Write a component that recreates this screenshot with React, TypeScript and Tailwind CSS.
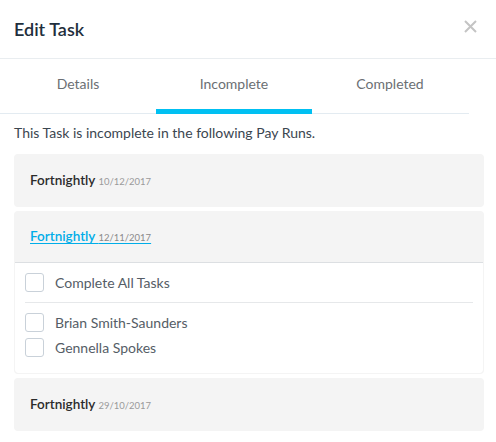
import React from "react";

const runs = [
  { name: "Fortnightly", date: "10/12/2017", open: false },
  { name: "Fortnightly", date: "12/11/2017", open: true },
  { name: "Fortnightly", date: "29/10/2017", open: false },
];

const employees = ["Brian Smith-Saunders", "Gennella Spokes"];

function Checkbox() {
  return <span className="block h-[19px] w-[19px] shrink-0 rounded-[3px] border border-[#c9d1d9] bg-white" />;
}

export default function App() {
  return (
    <div
      className="h-[442px] w-[496px] overflow-hidden bg-white"
      style={{ fontFamily: "Lato, 'Open Sans', sans-serif" }}
    >
      <div className="flex h-[59px] items-center justify-between border-b border-[#e9edf0] pl-[14px] pr-[19px]">
        <h2 className="text-[18px] font-semibold text-[#1f2f3d]">Edit Task</h2>
        <svg width="13" height="13" viewBox="0 0 13 13" className="mb-[5px]">
          <path d="M1 1L12 12M12 1L1 12" stroke="#c4c4c4" strokeWidth="2" />
        </svg>
      </div>

      <div className="flex w-[469px] border-b border-[#e3ebf1]">
        {["Details", "Incomplete", "Completed"].map((t) => (
          <div
            key={t}
            className={
              "-mb-px flex h-[55px] w-[156px] items-center justify-center border-b-[5px] text-[14px] leading-[20px] text-[#6b6f73] " +
              (t === "Incomplete" ? "border-[#00c0f2]" : "border-transparent")
            }
          >
            {t}
          </div>
        ))}
      </div>

      <div className="pl-[14px] pr-[12px]">
        <p className="mt-[9px] text-[14px] leading-[20px] text-[#3b4650]">
          This Task is incomplete in the following Pay Runs.
        </p>

        <div className="mt-[11px] flex flex-col gap-[4px]">
          {runs.map((r, i) => (
            <div key={i} className="overflow-hidden rounded-[4px] bg-[#f4f4f4]">
              <div className={"flex items-center px-[16px] " + (r.open ? "h-[51px]" : "h-[53px]")}>
                {r.open ? (
                  <span className="text-[13.5px] font-semibold text-[#00ade8] underline underline-offset-2">
                    Fortnightly <span className="text-[9.5px] font-normal text-[#8a8a8a]">{r.date}</span>
                  </span>
                ) : (
                  <span className="text-[13.5px] font-semibold text-[#2b2b2b]">
                    Fortnightly <span className="text-[9.5px] font-normal text-[#9a9a9a]">{r.date}</span>
                  </span>
                )}
              </div>
              {r.open && (
                <div className="mx-px mb-px rounded-b-[4px] border-t border-[#dcdfe2] bg-white px-[10px] pb-[16px] pt-[10px]">
                  <label className="flex items-center gap-[11px] leading-[19px]">
                    <Checkbox />
                    <span className="text-[14px] text-[#555d66]">Complete All Tasks</span>
                  </label>
                  <div className="my-[10px] border-t border-[#e6e8ea]" />
                  <div className="flex flex-col gap-[6px]">
                    {employees.map((e) => (
                      <label key={e} className="flex items-center gap-[11px] leading-[19px]">
                        <Checkbox />
                        <span className="text-[14px] text-[#555d66]">{e}</span>
                      </label>
                    ))}
                  </div>
                </div>
              )}
            </div>
          ))}
        </div>
      </div>
    </div>
  );
}
